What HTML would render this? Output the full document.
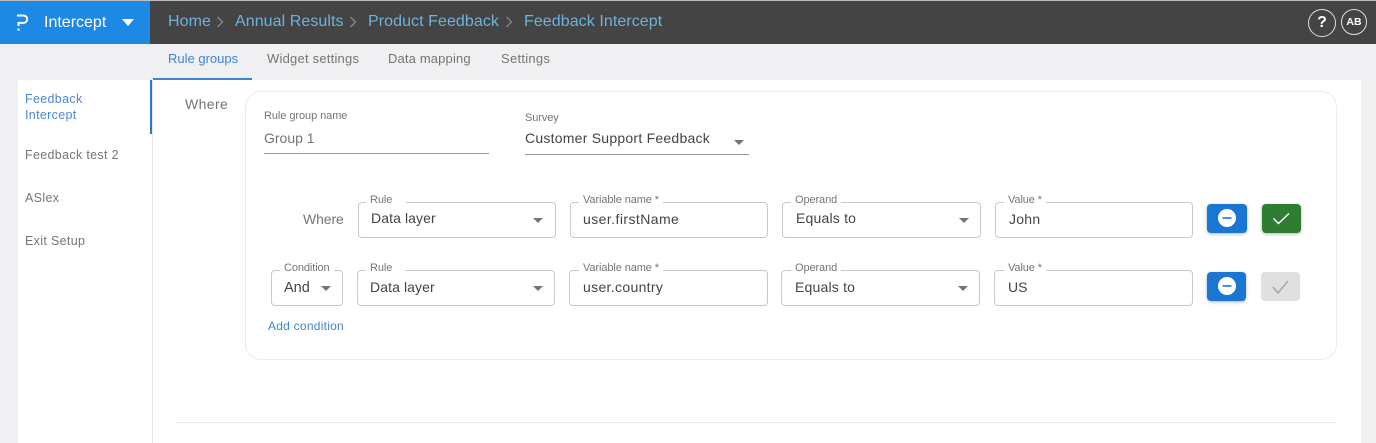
<!DOCTYPE html>
<html><head><meta charset="utf-8">
<style>
html,body{margin:0;padding:0;}
body{width:1376px;height:443px;overflow:hidden;position:relative;background:#f0f0f3;font-family:"Liberation Sans",sans-serif;}
.a{position:absolute;white-space:nowrap;}
.box{position:absolute;border:1px solid #c9c9c9;border-radius:4px;background:#fff;box-sizing:border-box;height:36px;}
.lab{position:absolute;font-size:11px;color:#757575;background:#fff;padding:0 4px;white-space:nowrap;line-height:12px;letter-spacing:-.1px;}
.val{position:absolute;font-size:14px;color:#444;white-space:nowrap;line-height:16px;}
.car{position:absolute;width:0;height:0;border-left:5px solid transparent;border-right:5px solid transparent;border-top:5px solid #757575;}
.bc{position:absolute;top:13px;font-size:16px;line-height:18px;color:#6db3dc;white-space:nowrap;letter-spacing:.07px;}
.tab{position:absolute;top:51px;font-size:13px;line-height:16px;color:#757575;white-space:nowrap;letter-spacing:.2px;}
.side{position:absolute;left:25px;font-size:12.5px;line-height:16px;color:#757575;white-space:nowrap;letter-spacing:.33px;}
.btn{position:absolute;width:40px;height:29px;border-radius:4px;box-shadow:0 1px 3px rgba(0,0,0,.3);}
</style></head><body>
<div class="a" style="left:0;top:0;width:1376px;height:1px;background:#bdbdbd"></div>
<div class="a" style="left:0;top:1px;width:1376px;height:43px;background:#444"></div>
<div class="a" style="left:0;top:1px;width:150px;height:43px;background:#1e88e5"></div>
<svg class="a" style="left:14px;top:13px" width="16" height="20" viewBox="0 0 16 20"><path d="M3 2.5H9.5a3.6 3.6 0 0 1 0 7.4H4.5V13" fill="none" stroke="#fff" stroke-width="2"/><rect x="3.5" y="15.5" width="2" height="2.2" fill="#fff"/></svg>
<div class="a" style="left:44px;top:14px;font-size:16px;line-height:18px;color:#fff">Intercept</div>
<div class="car" style="left:122px;top:19px;border-left-width:6px;border-right-width:6px;border-top:7px solid #fff"></div>

<div class="bc" style="left:168px">Home</div>
<svg class="a" style="left:216px;top:15px" width="9" height="14"><path d="M1.5 2L6.500 7L1.5 12" fill="none" stroke="#8a8a8a" stroke-width="1.300"/></svg>
<div class="bc" style="left:235px">Annual Results</div>
<svg class="a" style="left:349px;top:15px" width="9" height="14"><path d="M1.5 2L6.500 7L1.5 12" fill="none" stroke="#8a8a8a" stroke-width="1.300"/></svg>
<div class="bc" style="left:368px">Product Feedback</div>
<svg class="a" style="left:505px;top:15px" width="9" height="14"><path d="M1.5 2L6.500 7L1.5 12" fill="none" stroke="#8a8a8a" stroke-width="1.300"/></svg>
<div class="bc" style="left:524px">Feedback Intercept</div>

<div class="a" style="left:1308px;top:9px;width:26px;height:26px;border:1px solid #ddd;border-radius:50%;color:#fff;font-weight:bold;font-size:16px;line-height:26px;text-align:center">?</div>
<div class="a" style="left:1341px;top:9px;width:24px;height:24px;border:1px solid #ddd;border-radius:50%;color:#fff;font-weight:bold;font-size:10.500px;line-height:24px;text-align:center">AB</div>

<div class="tab" style="left:168px;color:#3f83d6;letter-spacing:0">Rule groups</div>
<div class="tab" style="left:267px;letter-spacing:.22px">Widget settings</div>
<div class="tab" style="left:388px;letter-spacing:.15px">Data mapping</div>
<div class="tab" style="left:501px;letter-spacing:.28px">Settings</div>
<div class="a" style="left:153px;top:78px;width:99px;height:2px;background:#3f83d6"></div>

<div class="a" style="left:18px;top:80px;width:1343px;height:363px;background:#fff"></div>
<div class="a" style="left:152px;top:80px;width:1px;height:363px;background:#e6e6e6"></div>
<div class="a" style="left:150px;top:80px;width:2px;height:54px;background:#2a77c9"></div>

<div class="side" style="top:91px;color:#4d86d6">Feedback<br>Intercept</div>
<div class="side" style="top:147px">Feedback test 2</div>
<div class="side" style="top:190px">ASlex</div>
<div class="side" style="top:233px">Exit Setup</div>

<div class="a" style="left:185px;top:96px;font-size:14px;line-height:16px;color:#757575;letter-spacing:.4px">Where</div>
<div class="a" style="left:245px;top:91px;width:1092px;height:269px;box-sizing:border-box;border:1px solid #ececec;border-radius:16px"></div>

<div class="a" style="left:264px;top:110px;font-size:11px;line-height:13px;color:#757575;letter-spacing:-.07px">Rule group name</div>
<div class="a" style="left:264px;top:130px;font-size:14px;line-height:16px;color:#757575">Group 1</div>
<div class="a" style="left:264px;top:153px;width:225px;height:1px;background:#999"></div>

<div class="a" style="left:525px;top:112px;font-size:11px;line-height:13px;color:#757575;letter-spacing:-.1px">Survey</div>
<div class="a" style="left:525px;top:130px;font-size:14px;line-height:16px;color:#444;letter-spacing:.24px">Customer Support Feedback</div>
<div class="car" style="left:734px;top:140px"></div>
<div class="a" style="left:525px;top:154px;width:224px;height:1px;background:#999"></div>

<div class="a" style="left:303px;top:211px;font-size:14px;line-height:16px;color:#757575;letter-spacing:-.1px">Where</div>

<div class="box" style="left:358px;top:202px;width:198px"></div>
<div class="lab" style="left:366px;top:194px;padding-right:14px">Rule</div>
<div class="val" style="left:371px;top:210px;letter-spacing:.1px">Data layer</div>
<div class="car" style="left:533px;top:218px"></div>

<div class="box" style="left:570px;top:202px;width:198px"></div>
<div class="lab" style="left:579px;top:194px">Variable name *</div>
<div class="val" style="left:583px;top:211px;letter-spacing:.43px">user.firstName</div>

<div class="box" style="left:782px;top:202px;width:199px"></div>
<div class="lab" style="left:791px;top:194px">Operand</div>
<div class="val" style="left:796px;top:210px;letter-spacing:.2px">Equals to</div>
<div class="car" style="left:959px;top:218px"></div>

<div class="box" style="left:995px;top:202px;width:198px"></div>
<div class="lab" style="left:1004px;top:194px">Value *</div>
<div class="val" style="left:1009px;top:211px;letter-spacing:.25px">John</div>

<div class="btn" style="left:1207px;top:204px;background:#1976d2"></div>
<svg class="a" style="left:1218px;top:209px" width="18" height="18"><circle cx="9" cy="9" r="9" fill="#fff"/><rect x="4.500" y="8" width="9" height="2" fill="#4a92e0"/></svg>
<div class="btn" style="left:1262px;top:204px;width:39px;background:#2e7d32"></div>
<svg class="a" style="left:1272px;top:210px" width="20" height="17"><path d="M1.5 8.500L6.500 13.500L17 3.500" fill="none" stroke="#fff" stroke-width="1.500"/></svg>

<div class="box" style="left:271px;top:270px;width:72px"></div>
<div class="lab" style="left:280px;top:262px">Condition</div>
<div class="val" style="left:284px;top:280px;font-size:14.500px">And</div>
<div class="car" style="left:321px;top:286px"></div>

<div class="box" style="left:357px;top:270px;width:198px"></div>
<div class="lab" style="left:366px;top:262px;padding-right:13px">Rule</div>
<div class="val" style="left:370px;top:279px;letter-spacing:.1px">Data layer</div>
<div class="car" style="left:533px;top:286px"></div>

<div class="box" style="left:569px;top:270px;width:199px"></div>
<div class="lab" style="left:579px;top:262px">Variable name *</div>
<div class="val" style="left:583px;top:279px;letter-spacing:.33px">user.country</div>

<div class="box" style="left:781px;top:270px;width:199px"></div>
<div class="lab" style="left:791px;top:262px">Operand</div>
<div class="val" style="left:795px;top:279px;letter-spacing:.2px">Equals to</div>
<div class="car" style="left:958px;top:286px"></div>

<div class="box" style="left:994px;top:270px;width:199px"></div>
<div class="lab" style="left:1004px;top:262px">Value *</div>
<div class="val" style="left:1008px;top:279px">US</div>

<div class="btn" style="left:1207px;top:272px;width:39px;background:#1976d2"></div>
<svg class="a" style="left:1218px;top:277px" width="18" height="18"><circle cx="9" cy="9" r="9" fill="#fff"/><rect x="4.500" y="8" width="9" height="2" fill="#4a92e0"/></svg>
<div class="a" style="left:1261px;top:272px;width:39px;height:29px;border-radius:4px;background:#e0e0e0"></div>
<svg class="a" style="left:1271px;top:278px" width="20" height="17"><path d="M2 9L7 15L17 3" fill="none" stroke="#a6a6a6" stroke-width="1.500"/></svg>

<div class="a" style="left:268px;top:319px;font-size:12px;line-height:15px;color:#3f83d6;letter-spacing:.25px">Add condition</div>

<div class="a" style="left:176px;top:422px;width:1160px;height:1px;background:#e8e8e8"></div>
</body></html>
